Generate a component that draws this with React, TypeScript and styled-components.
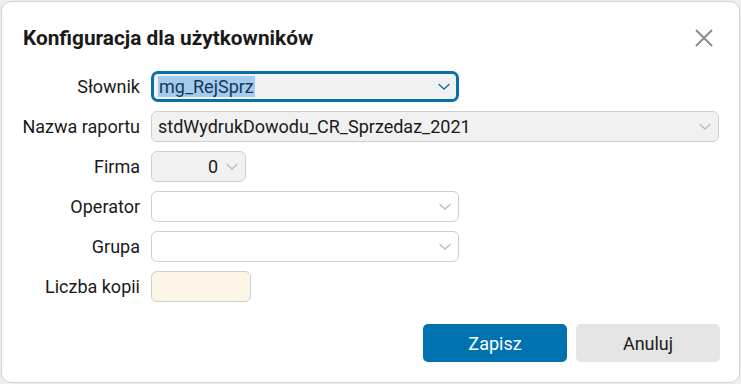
import React from 'react';
import styled, { createGlobalStyle } from 'styled-components';

const GlobalStyle = createGlobalStyle`
  html, body {
    margin: 0;
    padding: 0;
    background: #efefef;
    font-family: Roboto, "Liberation Sans", Arial, sans-serif;
  }
  * {
    box-sizing: border-box;
  }
`;

type FieldVariant = 'focused' | 'disabled' | 'empty' | 'cream';

interface FieldSpec {
  label: string;
  value?: string;
  width: number;
  variant: FieldVariant;
  select: boolean;
  alignRight?: boolean;
}

const fields: FieldSpec[] = [
  { label: 'Słownik', value: 'mg_RejSprz', width: 308, variant: 'focused', select: true },
  { label: 'Nazwa raportu', value: 'stdWydrukDowodu_CR_Sprzedaz_2021', width: 568, variant: 'disabled', select: true },
  { label: 'Firma', value: '0', width: 95, variant: 'disabled', select: true, alignRight: true },
  { label: 'Operator', width: 308, variant: 'empty', select: true },
  { label: 'Grupa', width: 308, variant: 'empty', select: true },
  { label: 'Liczba kopii', width: 100, variant: 'cream', select: false },
];

const Chevron: React.FC<{ color: string }> = ({ color }) => (
  <svg width="12" height="8" viewBox="0 0 12 8" fill="none">
    <path d="M1 1.5 L6 6 L11 1.5" stroke={color} strokeWidth="1.4" strokeLinecap="round" strokeLinejoin="round" />
  </svg>
);

const CloseIcon = () => (
  <svg width="18" height="18" viewBox="0 0 18 18" fill="none">
    <path d="M1.5 1.5 L16.5 16.5 M16.5 1.5 L1.5 16.5" stroke="#8c8c8c" strokeWidth="2" strokeLinecap="round" />
  </svg>
);

export default function App() {
  return (
    <>
      <GlobalStyle />
      <Dialog>
        <Header>
          <Title>Konfiguracja dla użytkowników</Title>
          <CloseButton aria-label="Zamknij">
            <CloseIcon />
          </CloseButton>
        </Header>
        <Form>
          {fields.map((f) => (
            <React.Fragment key={f.label}>
              <Label>{f.label}</Label>
              <Field $variant={f.variant} style={{ width: f.width }}>
                <Value $alignRight={!!f.alignRight}>
                  {f.variant === 'focused' ? <Selected>{f.value}</Selected> : f.value}
                </Value>
                {f.select && (
                  <Arrow>
                    <Chevron color={f.variant === 'focused' ? '#0a6fa8' : '#bdbdbd'} />
                  </Arrow>
                )}
              </Field>
            </React.Fragment>
          ))}
        </Form>
        <Footer>
          <Button $primary>Zapisz</Button>
          <Button>Anuluj</Button>
        </Footer>
      </Dialog>
    </>
  );
}

const Dialog = styled.div`
  margin: 1px;
  width: 739px;
  height: 382px;
  background: #fff;
  border: 1px solid #d2d2d2;
  border-radius: 10px;
  display: flex;
  flex-direction: column;
`;

const Header = styled.div`
  display: flex;
  align-items: center;
  justify-content: space-between;
  padding: 24px 26px 0 21px;
  height: 48px;
`;

const Title = styled.h1`
  margin: 0;
  font-size: 20.8px;
  line-height: 24px;
  font-weight: 700;
  color: #1a1a1a;
`;

const CloseButton = styled.button`
  border: none;
  background: none;
  padding: 0;
  width: 18px;
  height: 18px;
  display: flex;
  cursor: pointer;
`;

const Form = styled.div`
  margin-top: 21px;
  padding-left: 21px;
  display: grid;
  grid-template-columns: 117px auto;
  column-gap: 11px;
  row-gap: 9px;
  justify-items: start;
  align-items: center;
`;

const Label = styled.div`
  justify-self: end;
  white-space: nowrap;
  font-size: 18px;
  line-height: 21px;
  color: #1a1a1a;
`;

const variantStyles: Record<FieldVariant, string> = {
  focused: 'background: #f1f1f1; border: 3px solid #0a6fa8; border-radius: 7px; padding: 0 6px 0 4px;',
  disabled: 'background: #f1f1f1; border: 1px solid #cfcfcf; border-radius: 6px; padding: 0 7px 0 6px;',
  empty: 'background: #fff; border: 1px solid #cfcfcf; border-radius: 6px; padding: 0 7px 0 6px;',
  cream: 'background: #fdf6e7; border: 1px solid #cfcfcf; border-radius: 6px; padding: 0 7px 0 6px;',
};

const Field = styled.div<{ $variant: FieldVariant }>`
  height: 31px;
  display: flex;
  align-items: center;
  gap: 8px;
  font-size: 18px;
  color: #1a1a1a;
  ${(p) => variantStyles[p.$variant]}
`;

const Value = styled.div<{ $alignRight: boolean }>`
  flex: 1;
  white-space: nowrap;
  overflow: hidden;
  line-height: 21px;
  text-align: ${(p) => (p.$alignRight ? 'right' : 'left')};
`;

const Selected = styled.span`
  background: #a3cbee;
  color: #17365c;
  padding: 0 1px;
`;

const Arrow = styled.span`
  display: flex;
  width: 12px;
`;

const Footer = styled.div`
  margin-top: auto;
  padding: 0 19px 20px 0;
  display: flex;
  justify-content: flex-end;
  gap: 9px;
`;

const Button = styled.button<{ $primary?: boolean }>`
  width: 144px;
  height: 38px;
  border: none;
  border-radius: 5px;
  font-family: Roboto, "Liberation Sans", Arial, sans-serif;
  font-size: 18px;
  cursor: pointer;
  background: ${(p) => (p.$primary ? '#0072b0' : '#e5e5e5')};
  color: ${(p) => (p.$primary ? '#fff' : '#1a1a1a')};
`;
